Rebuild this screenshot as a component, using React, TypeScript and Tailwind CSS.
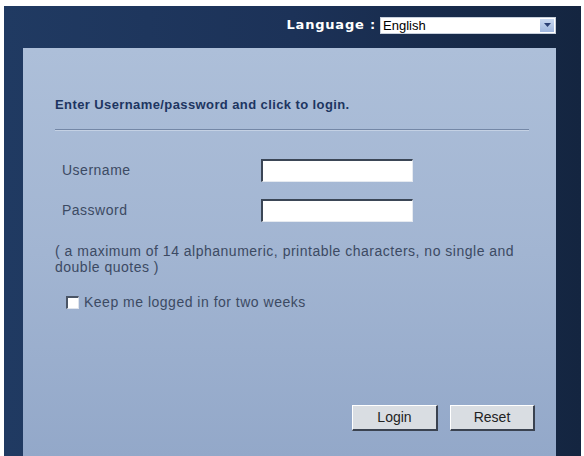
import React from "react";

export default function App() {
  return (
    <div
      className="w-[584px] h-[456px] bg-white pt-[6px] pl-[4px] pr-[3px] overflow-hidden"
      style={{ fontFamily: '"Liberation Sans", Arial, sans-serif' }}
    >
      <div className="h-[450px] flex flex-col bg-gradient-to-r from-[#203a62] via-[#1c3258] to-[#142540] pl-[19px] pr-[25px]">
        {/* language bar */}
        <div className="h-[42px] flex items-center justify-end gap-[4px] pb-[4px]">
          <span
            className="text-white font-bold text-[13px] tracking-[0.8px]"
            style={{ fontFamily: '"DejaVu Sans", Verdana, sans-serif' }}
          >
            Language :
          </span>
          <div className="w-[176px] h-[17px] bg-white flex items-center border border-[#c8d0dc]">
            <span className="flex-1 text-[13px] text-black pl-[2px] leading-none">English</span>
            <div className="w-[14px] h-[13px] mr-[1px] bg-gradient-to-b from-[#c9d8f0] to-[#9fb6de] flex items-center justify-center">
              <svg width="7" height="4" viewBox="0 0 7 4">
                <path d="M0 0 L7 0 L3.5 4 Z" fill="#2a3f74" />
              </svg>
            </div>
          </div>
        </div>
        {/* login panel */}
        <div className="flex-1 bg-gradient-to-b from-[#adbfd9] via-[#a2b5d2] to-[#93a8c9] pl-[32px] pr-[21px] flex flex-col">
          <div className="pt-[47px] text-[13px] font-bold tracking-[0.4px] text-[#1d3561]">
            Enter Username/password and click to login.
          </div>
          <div className="mt-[14px] mr-[6px] h-[2px] bg-[#7487a6] border-b border-[#c4d1e4]" />
          <div className="mt-[28px] pl-[7px] flex items-center text-[14px] tracking-[0.5px] text-[#3c4a63]">
            <span className="w-[199px]">Username</span>
            <input
              type="text"
              className="w-[152px] h-[23px] bg-white border-t-2 border-l-2 border-[#3b4656] border-r border-b border-r-[#e6eaf0] border-b-[#e6eaf0] outline-none"
            />
          </div>
          <div className="mt-[17px] pl-[7px] flex items-center text-[14px] tracking-[0.5px] text-[#3c4a63]">
            <span className="w-[199px]">Password</span>
            <input
              type="password"
              className="w-[152px] h-[23px] bg-white border-t-2 border-l-2 border-[#3b4656] border-r border-b border-r-[#e6eaf0] border-b-[#e6eaf0] outline-none"
            />
          </div>
          <div className="mt-[21px] text-[14px] tracking-[0.5px] leading-[16px] text-[#3c4a63]">
            ( a maximum of 14 alphanumeric, printable characters, no single and
            <br />
            double quotes )
          </div>
          <div className="mt-[17px] pl-[11px] flex items-center gap-[5px]">
            <div className="w-[13px] h-[13px] bg-white border-t-2 border-l-2 border-[#4a5566] border-r border-b border-r-[#dfe4ec] border-b-[#dfe4ec]" />
            <span className="text-[14px] tracking-[0.5px] text-[#3c4a63]">Keep me logged in for two weeks</span>
          </div>
          <div className="flex-1" />
          <div className="flex justify-end gap-[12px] pb-[25px]">
            <button className="w-[86px] h-[26px] bg-[#d9dde2] text-[14px] text-[#222] border-t border-l border-white border-r-2 border-b-2 border-r-[#3a4250] border-b-[#3a4250]">
              Login
            </button>
            <button className="w-[85px] h-[26px] bg-[#d9dde2] text-[14px] text-[#222] border-t border-l border-white border-r-2 border-b-2 border-r-[#3a4250] border-b-[#3a4250]">
              Reset
            </button>
          </div>
        </div>
      </div>
    </div>
  );
}
